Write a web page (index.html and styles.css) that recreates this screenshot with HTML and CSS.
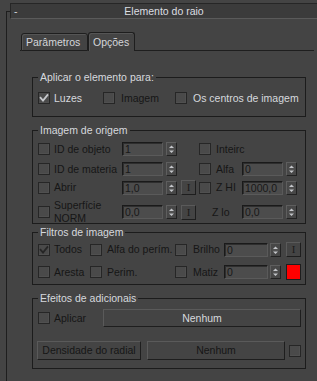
FILE: index.html
```html
<!DOCTYPE html>
<html>
<head>
<meta charset="utf-8">
<link rel="stylesheet" href="styles.css">
</head>
<body>
<div class="rollout">
  <div class="bar"><span class="minus">-</span><span class="bar-title">Elemento do raio</span><span></span></div>
  <div class="tabs">
    <div class="tab">Parâmetros</div>
    <div class="tab active">Opções</div>
  </div>
  <div class="panel">
    <div class="group g1">
      <div class="gtitle">Aplicar o elemento para:</div>
      <div class="r-apply">
        <span class="cb on"><svg viewBox="0 0 10 10"><path d="M1 4.2L4 7.6L9 1.4"/></svg></span><span class="lbl light p4">Luzes</span>
        <span class="cb"></span><span class="lbl dim p6">Imagem</span>
        <span class="cb"></span><span class="lbl light p6">Os centros de imagem</span>
      </div>
    </div>

    <div class="group g2">
      <div class="gtitle">Imagem de origem</div>
      <div class="grid2 r1">
        <span class="cb"></span><span class="lbl dim p4">ID de objeto</span>
        <span class="num c-inp">1</span>
        <span class="spin c-spin"><svg viewBox="0 0 9 12"><path class="tri" d="M2 5h5L4.5 2.5z"/><path class="sep" d="M1.5 6h6"/><path class="tri" d="M2 7.5h5L4.5 10z"/></svg></span>
        <span class="cb c-cb2"></span><span class="lbl dim p5">Inteirc</span>
      </div>
      <div class="grid2 r2">
        <span class="cb"></span><span class="lbl dim p4">ID de materia</span>
        <span class="num c-inp">1</span>
        <span class="spin c-spin"><svg viewBox="0 0 9 12"><path class="tri" d="M2 5h5L4.5 2.5z"/><path class="sep" d="M1.5 6h6"/><path class="tri" d="M2 7.5h5L4.5 10z"/></svg></span>
        <span class="cb c-cb2"></span><span class="lbl dim p5">Alfa</span>
        <span class="num c-inp2">0</span>
        <span class="spin c-spin2"><svg viewBox="0 0 9 12"><path class="tri" d="M2 5h5L4.5 2.5z"/><path class="sep" d="M1.5 6h6"/><path class="tri" d="M2 7.5h5L4.5 10z"/></svg></span>
      </div>
      <div class="grid2 r3">
        <span class="cb"></span><span class="lbl dim p4">Abrir</span>
        <span class="num c-inp">1,0</span>
        <span class="spin c-spin"><svg viewBox="0 0 9 12"><path class="tri" d="M2 5h5L4.5 2.5z"/><path class="sep" d="M1.5 6h6"/><path class="tri" d="M2 7.5h5L4.5 10z"/></svg></span>
        <span class="ibtn c-btn">I</span>
        <span class="cb c-cb2"></span><span class="lbl dim p5">Z HI</span>
        <span class="num c-inp2">1000,0</span>
        <span class="spin c-spin2"><svg viewBox="0 0 9 12"><path class="tri" d="M2 5h5L4.5 2.5z"/><path class="sep" d="M1.5 6h6"/><path class="tri" d="M2 7.5h5L4.5 10z"/></svg></span>
      </div>
      <div class="grid2 r4">
        <span class="cb"></span><span class="lbl dim p4 two">Superfície<br>NORM</span>
        <span class="num c-inp">0,0</span>
        <span class="spin c-spin"><svg viewBox="0 0 9 12"><path class="tri" d="M2 5h5L4.5 2.5z"/><path class="sep" d="M1.5 6h6"/><path class="tri" d="M2 7.5h5L4.5 10z"/></svg></span>
        <span class="ibtn c-btn">I</span>
        <span class="lbl dim zlo">Z lo</span>
        <span class="num c-inp2">0,0</span>
        <span class="spin c-spin2"><svg viewBox="0 0 9 12"><path class="tri" d="M2 5h5L4.5 2.5z"/><path class="sep" d="M1.5 6h6"/><path class="tri" d="M2 7.5h5L4.5 10z"/></svg></span>
      </div>
    </div>

    <div class="group g3">
      <div class="gtitle">Filtros de imagem</div>
      <div class="grid3 f1">
        <span class="cb on dark"><svg viewBox="0 0 10 10"><path d="M1 4.2L4 7.6L9 1.4"/></svg></span><span class="lbl dim p4">Todos</span>
        <span class="cb"></span><span class="lbl dim p5">Alfa do perím.</span>
        <span class="cb"></span><span class="lbl dim p6">Brilho</span>
        <span class="num">0</span>
        <span class="spin f-spin"><svg viewBox="0 0 9 12"><path class="tri" d="M2 5h5L4.5 2.5z"/><path class="sep" d="M1.5 6h6"/><path class="tri" d="M2 7.5h5L4.5 10z"/></svg></span>
        <span class="ibtn f-btn">I</span>
      </div>
      <div class="grid3 f2">
        <span class="cb"></span><span class="lbl dim p4">Aresta</span>
        <span class="cb"></span><span class="lbl dim p5">Perim.</span>
        <span class="cb"></span><span class="lbl dim p6">Matiz</span>
        <span class="num">0</span>
        <span class="spin f-spin"><svg viewBox="0 0 9 12"><path class="tri" d="M2 5h5L4.5 2.5z"/><path class="sep" d="M1.5 6h6"/><path class="tri" d="M2 7.5h5L4.5 10z"/></svg></span>
        <span class="swatch f-btn"></span>
      </div>
    </div>

    <div class="group g4">
      <div class="gtitle">Efeitos de adicionais</div>
      <div class="e1">
        <span class="cb"></span><span class="lbl dim p4">Aplicar</span>
        <span class="btn light">Nenhum</span>
      </div>
      <div class="e2">
        <span class="btn dim">Densidade do radial</span>
        <span class="btn dim e2-map">Nenhum</span>
        <span class="cb e2-cb"></span>
      </div>
    </div>
  </div>
</div>
</body>
</html>
```

FILE: styles.css
```css
* { box-sizing: border-box; }
html, body { margin: 0; padding: 0; }
body {
  width: 317px;
  height: 381px;
  overflow: hidden;
  background: #444444;
  font-family: "Liberation Sans", Arial, sans-serif;
  font-size: 10.5px;
  line-height: 13px;
  color: #d4d6da;
}

.light { color: #d6d9de; }
.dim { color: #161616; }

.rollout {
  margin: 11px 0 0 6px;
  height: 370px;
  border-left: 1px solid #1e1e1e;
  border-top: 1px solid #1e1e1e;
}

.bar {
  margin: -9px 0 0 3px;
  height: 16px;
  display: grid;
  grid-template-columns: 1fr auto 1fr;
  align-items: center;
  background: #3b3b3b;
  border-top: 1px solid #262626;
  border-left: 1px solid #262626;
  border-bottom: 1px solid #5a5a5a;
}
.minus { padding-left: 3px; }
.bar-title { color: #dcdee2; }

.tabs {
  display: flex;
  align-items: flex-end;
  margin: 13px 3px 0 13px;
}
.tabs::before {
  content: "";
  width: 1px;
  border-bottom: 1px solid #1e1e1e;
}
.tabs::after {
  content: "";
  flex: 1;
  border-bottom: 1px solid #1e1e1e;
}
.tab {
  width: 67px;
  height: 18px;
  padding: 0 0 0 4px;
  line-height: 16px;
  border: 1px solid #1e1e1e;
  border-radius: 3px 3px 0 0;
  box-shadow: inset 1px 1px 0 #555555;
  background: #434343;
}
.tab.active {
  width: 47px;
  height: 19px;
  padding-top: 1px;
  border-bottom: none;
  background: #444444;
}

.panel {
  margin: 0 3px 0 13px;
  padding-left: 12px;
}

.group {
  width: 274px;
  border: 1px solid #1c1c1c;
}
.gtitle {
  width: fit-content;
  margin: -7px 0 0 5px;
  padding: 0 2px;
  background: #444444;
  color: #d6d9de;
}
.g1 { margin-top: 26px; height: 40px; }
.g2 { margin-top: 13px; height: 94px; }
.g3 { margin-top: 8px; height: 53px; }
.g4 { margin-top: 13px; height: 71px; }

/* checkbox */
.cb {
  width: 12px;
  height: 12px;
  border: 1px solid #262626;
  background: #4a4a4a;
  box-shadow: inset -1px -1px 0 #505050;
  display: block;
  align-self: center;
}
.cb svg { display: block; width: 10px; height: 10px; }
.cb svg path { fill: none; stroke: #c6c8cc; stroke-width: 1.8; }
.cb.dark svg path { stroke: #262626; }

.lbl { white-space: nowrap; align-self: center; }
.p4 { padding-left: 4px; }
.p5 { padding-left: 5px; }
.p6 { padding-left: 6px; }

.r-apply {
  height: 14px;
  margin-top: 7px;
  padding-left: 5px;
  display: grid;
  grid-template-columns: 12px 53px 12px 60px 12px auto;
  align-items: center;
}

/* numeric field */
.num {
  display: block;
  height: 14px;
  padding-left: 2px;
  line-height: 12px;
  border: 1px solid;
  border-color: #1a1a1a #5a5a5a #5a5a5a #1a1a1a;
  box-shadow: inset 1px 1px 0 #2e2e2e;
  background: #4c4c4c;
  color: #181818;
  align-self: center;
}

/* spinner */
.spin {
  display: block;
  width: 11px;
  height: 14px;
  border: 1px solid;
  border-color: #5e5e5e #222222 #222222 #5e5e5e;
  background: #474747;
  align-self: center;
}
.spin svg { display: block; width: 9px; height: 12px; }
.spin .tri { fill: #c4c6ca; }
.spin .sep { stroke: #5c5c5c; stroke-width: 1; }

/* small I button */
.ibtn {
  display: block;
  width: 15px;
  height: 15px;
  border: 1px solid;
  border-color: #5a5a5a #1e1e1e #1e1e1e #5a5a5a;
  font-family: "Liberation Serif", "Times New Roman", serif;
  font-size: 11px;
  line-height: 13px;
  text-align: center;
  color: #1a1a1a;
  align-self: center;
}

.swatch {
  display: block;
  width: 15px;
  height: 16px;
  background: #ff0000;
  border: 1px solid #1e1e1e;
  align-self: center;
}

/* group 2 grid */
.grid2 {
  height: 14px;
  padding-left: 5px;
  display: grid;
  grid-template-columns: 12px 72px 41px 3px 11px 4px 15px 3px 12px 31px 41px 3px 11px;
  align-items: center;
}
.grid2 .c-inp { grid-column: 3; }
.grid2 .c-spin { grid-column: 5; }
.grid2 .c-btn { grid-column: 7; }
.grid2 .c-cb2 { grid-column: 9; }
.grid2 .c-inp2 { grid-column: 11; }
.grid2 .c-spin2 { grid-column: 13; }
.grid2 .zlo { grid-column: 9 / span 2; padding-left: 13px; }
.r1 { margin-top: 5px; }
.r2 { margin-top: 6px; }
.r3 { margin-top: 4px; height: 15px; }
.r4 { margin-top: 4px; height: 15px; }

/* group 3 grid */
.grid3 {
  padding-left: 5px;
  display: grid;
  grid-template-columns: 12px 40px 12px 73px 12px 37px 44px 2px 11px 5px 15px;
  align-items: center;
}
.grid3 .num { grid-column: 7; }
.grid3 .f-spin { grid-column: 9; }
.grid3 .f-btn { grid-column: 11; }
.f1 { margin-top: 3px; height: 15px; }
.f2 { margin-top: 7px; height: 16px; }

/* group 4 */
.btn {
  display: block;
  text-align: center;
  border: 1px solid;
  border-color: #5a5a5a #1e1e1e #1e1e1e #5a5a5a;
  white-space: nowrap;
}
.e1 {
  margin-top: 4px;
  height: 18px;
  padding-left: 5px;
  display: grid;
  grid-template-columns: 12px 53px 198px;
  align-items: center;
}
.e1 .btn { height: 18px; line-height: 16px; }
.e2 {
  margin-top: 14px;
  height: 19px;
  padding-left: 4px;
  display: grid;
  grid-template-columns: 104px 6px 138px 4px 12px;
  align-items: center;
}
.e2 .btn { height: 19px; line-height: 17px; }
.e2 .e2-map { grid-column: 3; }
.e2 .e2-cb { grid-column: 5; }
```
